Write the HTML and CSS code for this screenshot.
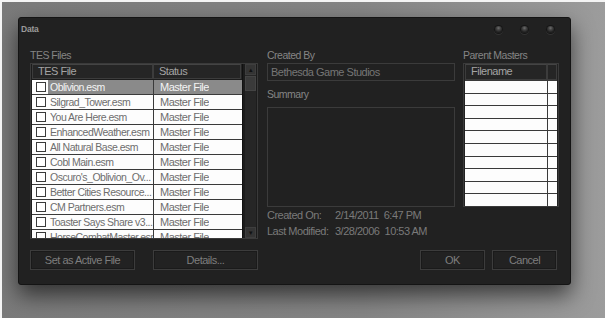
FILE: index.html
```html
<!DOCTYPE html>
<html>
<head>
  <title>Data</title>
  <link rel="stylesheet" href="styles.css">
</head>
<body>
  <div class="dialog">
    <div class="titlebar">
      <span class="title">Data</span>
      <div class="dots">
        <span class="dot"></span>
        <span class="dot"></span>
        <span class="dot"></span>
      </div>
    </div>

    <div class="main">
      <!-- Lista de arquivos -->
      <div class="col">
        <div class="label">TES Files</div>
        <div class="list">
          <div class="list-area">
            <div class="head">
              <div class="hcell c1">TES File</div>
              <div class="hcell c2">Status</div>
            </div>
            <div class="rows" id="files"></div>
          </div>
          <div class="scroll">
            <div class="sbtn">&#9652;</div>
            <div class="thumb"></div>
            <div class="track"></div>
            <div class="sbtn">&#9662;</div>
          </div>
        </div>
      </div>

      <!-- Detalhes -->
      <div class="col">
        <div class="label">Created By</div>
        <div class="field">Bethesda Game Studios</div>
        <div class="label tall">Summary</div>
        <div class="summary"></div>
        <div class="info">
          <span class="info-key">Created On:</span>
          <span>2/14/2011&nbsp;&nbsp;6:47 PM</span>
        </div>
        <div class="info">
          <span class="info-key">Last Modified:</span>
          <span>3/28/2006&nbsp;&nbsp;10:53 AM</span>
        </div>
      </div>

      <!-- Masters -->
      <div class="col">
        <div class="label">Parent Masters</div>
        <div class="masters">
          <div class="mhead">
            <div class="hcell m1">Filename</div>
            <div class="hcell m2"></div>
          </div>
          <div id="masters"></div>
        </div>
      </div>
    </div>

    <div class="buttons">
      <button class="btn wide">Set as Active File</button>
      <button class="btn wide">Details...</button>
      <span class="spacer"></span>
      <button class="btn small">OK</button>
      <button class="btn small">Cancel</button>
    </div>
  </div>

  <script>
    var files = [
      "Oblivion.esm", "Silgrad_Tower.esm", "You Are Here.esm", "EnhancedWeather.esm",
      "All Natural Base.esm", "Cobl Main.esm", "Oscuro's_Oblivion_Ov...",
      "Better Cities Resource...", "CM Partners.esm", "Toaster Says Share v3...",
      "HorseCombatMaster.esm"
    ];

    var filesBody = document.getElementById("files");
    files.forEach(function(name, i) {
      var row = document.createElement("div");
      row.className = i === 0 ? "row selected" : "row";
      row.innerHTML = '<div class="cell c1"><span class="check"></span><span class="name"></span></div>' +
        '<div class="cell c2">Master File</div>';
      row.querySelector(".name").textContent = name;
      filesBody.appendChild(row);
    });

    var mastersBody = document.getElementById("masters");
    for (var i = 0; i < 10; i++) {
      var mrow = document.createElement("div");
      mrow.className = "mrow";
      mrow.innerHTML = '<div class="mcell m1"></div><div class="mcell m2"></div>';
      mastersBody.appendChild(mrow);
    }
  </script>
</body>
</html>
```

FILE: styles.css
```css
html, body {
  margin: 0;
  padding: 0;
}

body {
  width: 605px;
  height: 318px;
  box-sizing: border-box;
  border-top: 2px solid #f4f4f4;
  border-left: 2px solid #f4f4f4;
  padding: 15px 0 0 16px;
  background: linear-gradient(90deg, #7a7a7a 0%, #858585 60%, #9c9c9c 100%);
  font-family: "Liberation Sans", Arial, sans-serif;
  font-size: 10.5px;
  letter-spacing: -0.5px;
  color: #888;
  overflow: hidden;
}

.dialog {
  width: 553px;
  height: 268px;
  box-sizing: border-box;
  background: #212121;
  border: 1px solid #141414;
  border-radius: 3px;
  box-shadow: 0 10px 22px rgba(0, 0, 0, 0.6);
  display: flex;
  flex-direction: column;
}

.titlebar {
  height: 29px;
  display: flex;
  justify-content: space-between;
  align-items: flex-start;
  padding: 5px 0 0 2px;
  box-sizing: border-box;
}

.title {
  font-size: 8.5px;
  font-weight: bold;
  letter-spacing: -0.2px;
  color: #9a9a9a;
  line-height: 12px;
}

.dots {
  display: flex;
  gap: 19px;
  padding: 3px 16px 0 0;
}

.dot {
  width: 7px;
  height: 7px;
  border-radius: 50%;
  background: radial-gradient(circle at 50% 30%, #6e6e6e 0, #444 30%, #1e1e1e 70%);
  box-shadow: 0 0 0 1px #161616, 0 1px 0 1px #333;
}

.main {
  height: 192px;
  display: grid;
  grid-template-columns: 228px 187px 96px;
  column-gap: 9px;
  padding: 0 13px 0 11px;
}

.main .col:nth-child(2) {
  margin-right: -1px;
}

.col {
  display: flex;
  flex-direction: column;
}

.label {
  height: 16px;
  line-height: 16px;
  color: #858585;
  white-space: nowrap;
}

.label.tall {
  height: 26px;
  line-height: 26px;
}

/* Lista de arquivos */
.list {
  height: 176px;
  box-sizing: border-box;
  border: 1px solid #3a3a3a;
  background: #1c1c1c;
  padding: 0 1px 0 1px;
  display: flex;
  overflow: hidden;
}

.list-area {
  width: 212px;
  overflow: hidden;
  border-right: 1px solid #111;
}

.head {
  display: flex;
  height: 15px;
  background: #252525;
}

.hcell {
  box-sizing: border-box;
  border: 1px solid #3c3c3c;
  border-top-color: #444;
  line-height: 13px;
  padding-left: 5px;
  color: #a4a4a4;
  font-size: 11px;
}

.head .c1 {
  width: 121px;
}

.head .c2 {
  width: 88px;
}

.rows {
  padding-top: 1px;
}

.row {
  display: flex;
  height: 15px;
  box-sizing: border-box;
  background: #fdfdfd;
  border-bottom: 1px solid #3a3a3a;
  color: #6e6e6e;
  font-size: 10.5px;
}

.row.selected {
  background: #8a8a8a;
  color: #f4f4f4;
}

.row.selected .c1 {
  background: linear-gradient(90deg, #fdfdfd 0, #fdfdfd 16px, #8a8a8a 16px);
}

.cell {
  line-height: 14px;
  white-space: nowrap;
  overflow: hidden;
}

.cell.c1 {
  width: 122px;
  box-sizing: border-box;
  border-right: 1px solid #3a3a3a;
  padding-left: 4px;
  display: flex;
  align-items: center;
}

.cell.c2 {
  padding-left: 6px;
  font-size: 11px;
}

.check {
  width: 8px;
  height: 8px;
  border: 1px solid #3a3a3a;
  background: #fff;
  margin-right: 4px;
  flex: none;
}

.scroll {
  width: 11px;
  margin-left: 2px;
  display: flex;
  flex-direction: column;
  background: #262626;
}

.sbtn {
  height: 11px;
  background: #343434;
  border: 1px solid #3e3e3e;
  box-sizing: border-box;
  color: #111;
  font-size: 7px;
  line-height: 9px;
  text-align: center;
}

.thumb {
  height: 13px;
  background: #3a3a3a;
  border: 1px solid #444;
  margin-top: 1px;
}

.track {
  flex: 1;
}

/* Detalhes */
.field {
  height: 18px;
  box-sizing: border-box;
  border: 1px solid #3b3b3b;
  line-height: 16px;
  padding-left: 3px;
  color: #767676;
  font-size: 11px;
}

.summary {
  height: 100px;
  box-sizing: border-box;
  border: 1px solid #3b3b3b;
}

.info {
  display: flex;
  height: 16px;
  line-height: 16px;
  color: #7a7a7a;
  font-size: 11px;
  white-space: nowrap;
}

.info:first-of-type {
  margin-top: 3px;
}

.info-key {
  width: 68px;
}

/* Masters */
.masters {
  height: 144px;
  box-sizing: border-box;
  border: 1px solid #3a3a3a;
  padding: 0 1px;
  overflow: hidden;
}

.mhead {
  display: flex;
  height: 16px;
  background: #252525;
}

.mhead .m1 {
  width: 82px;
  padding-left: 5px;
}

.mhead .m2 {
  flex: 1;
  padding: 0;
}

.mrow {
  display: flex;
  height: 12.6px;
  box-sizing: border-box;
  background: #fdfdfd;
  border-top: 1px solid #3a3a3a;
}

.mcell.m1 {
  width: 82px;
  border-right: 1px solid #3a3a3a;
}

/* Botões */
.buttons {
  display: flex;
  padding: 11px 13px 0 11px;
}

.spacer {
  flex: 1;
}

.btn {
  height: 20px;
  box-sizing: border-box;
  background: #222;
  border: 1px solid #3c3c3c;
  box-shadow: inset 0 0 0 1px #1a1a1a;
  color: #7e7e7e;
  font-family: inherit;
  font-size: 11px;
  letter-spacing: -0.5px;
  padding: 0;
}

.btn.wide {
  width: 105px;
  margin-right: 18px;
}

.btn.small {
  width: 65px;
  margin-left: 7px;
}
```
